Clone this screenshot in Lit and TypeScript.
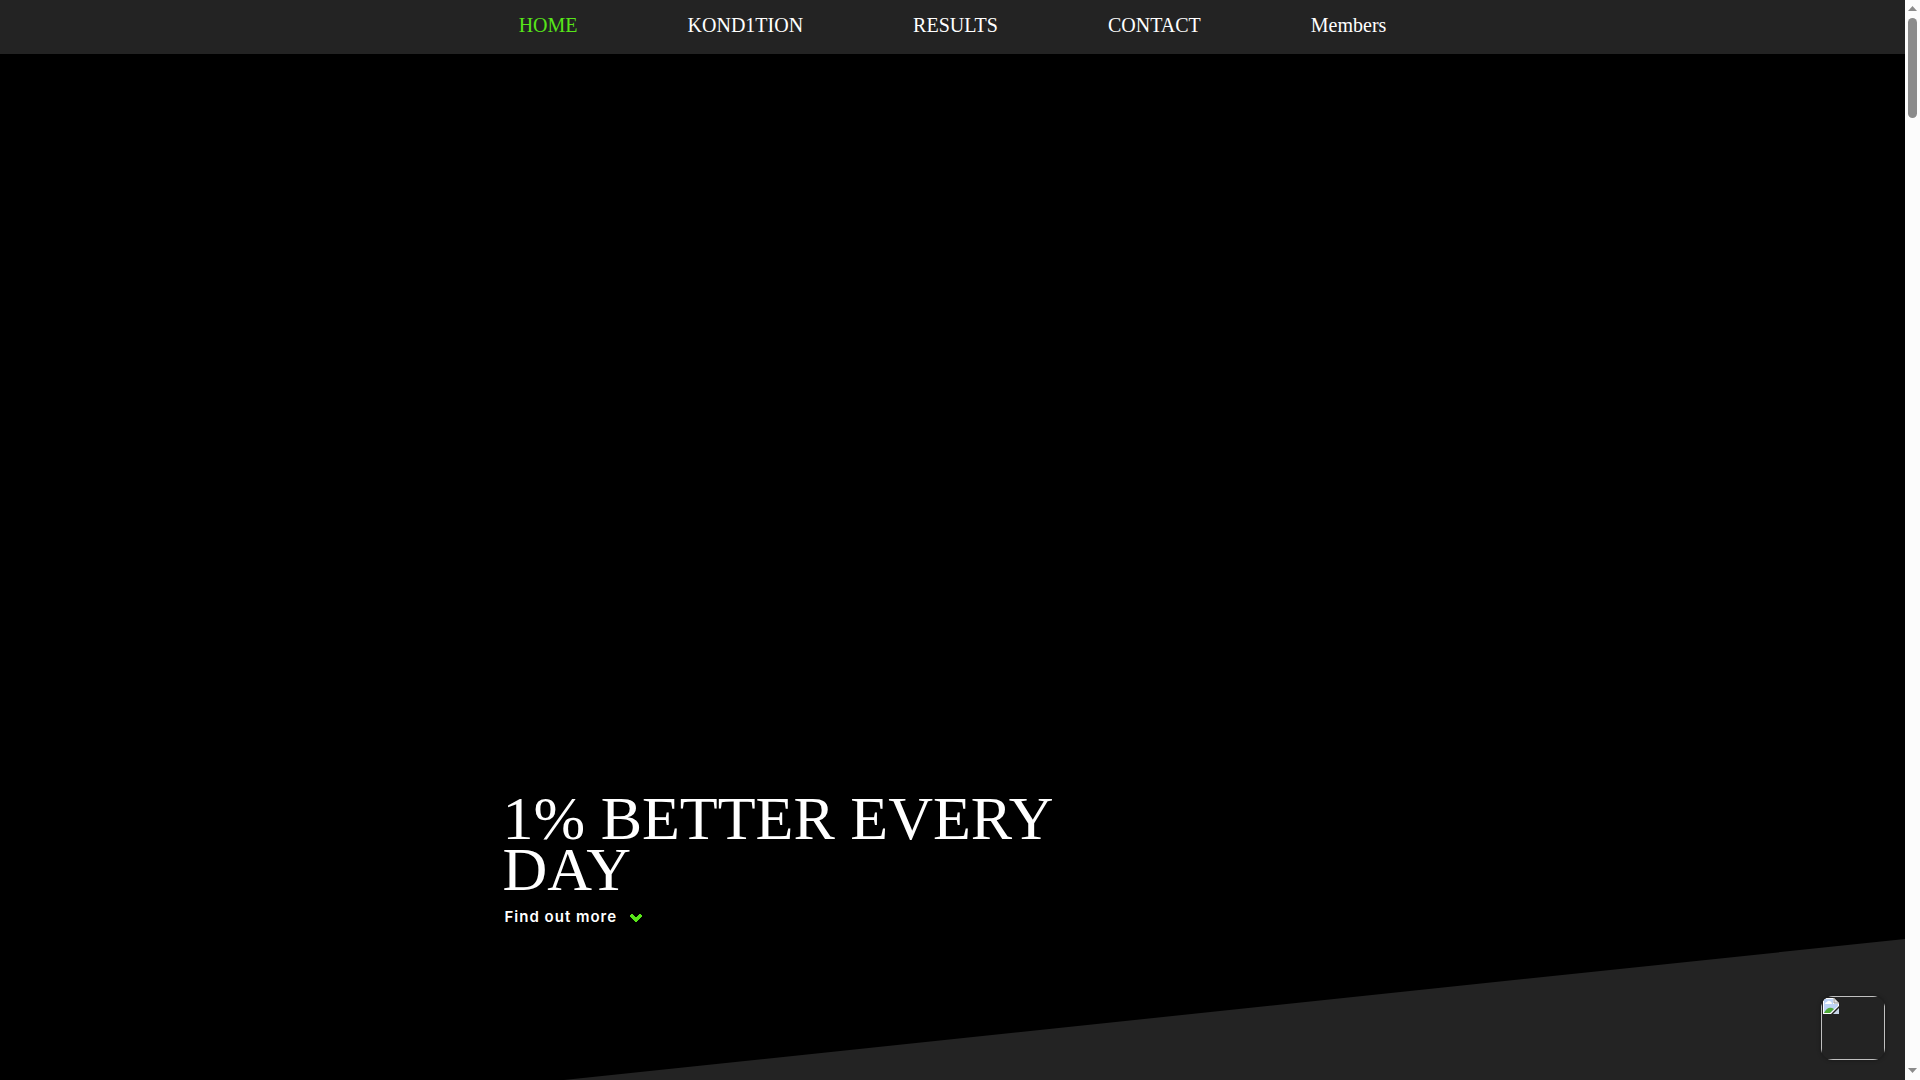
import { LitElement, html, css } from "lit";
import { customElement, state } from "lit/decorators.js";

const links = ["HOME", "KOND1TION", "RESULTS", "CONTACT", "Members"];

@customElement("site-nav")
class SiteNav extends LitElement {
  @state() active = "HOME";

  static styles = css`
    :host {
      display: block;
      background: #232323;
      font: 20px/24px "Liberation Serif", serif;
    }
    .list {
      display: flex;
      justify-content: center;
      gap: 110px;
      margin: 0;
      padding: 13px 0 17px;
      list-style: none;
    }
    .link {
      color: #fff;
      text-decoration: none;
    }
    .link.active {
      color: #57e619;
    }
  `;

  render() {
    return html`<nav aria-label="Main">
      <ul class="list">
        ${links.map(
          (name) => html`<li>
            <a
              class="link ${name === this.active ? "active" : ""}"
              href="#${name.toLowerCase()}"
              @click=${() => (this.active = name)}
              >${name}</a
            >
          </li>`
        )}
      </ul>
    </nav>`;
  }
}

@customElement("chat-button")
class ChatButton extends LitElement {
  static styles = css`
    :host {
      display: block;
    }
    .button {
      display: block;
      width: 64px;
      height: 64px;
      padding: 0;
      border: 0;
      border-radius: 12px;
      overflow: hidden;
      background: #232323;
      box-shadow: 0 0 4px rgba(0, 0, 0, 0.4);
      cursor: pointer;
    }
    .frame {
      display: flex;
      align-items: flex-start;
      box-sizing: border-box;
      width: 100%;
      height: 100%;
      padding: 1px;
      border: 1px solid #c0c0c0;
    }
  `;

  render() {
    return html`<button class="button" aria-label="Open chat">
      <span class="frame">
        <svg width="16" height="16" viewBox="0 0 16 16" aria-hidden="true">
          <path d="M0 0H11L16 5V8L8 16H0Z" fill="#fff" />
          <path d="M1 1H10V6H15V8L7 15H1Z" fill="#bdd3f5" />
          <path d="M2 6Q2 4 4 4Q5 2 7 3Q9 4 9 6Z" fill="#fff" />
          <path d="M1 15Q5 7 11 11L7 15Z" fill="#4faa38" />
          <path d="M11 0V5H16Z" fill="#e4e4e4" stroke="#999" stroke-width="1" />
          <path d="M16 10V16H10Z" fill="#c9d6ea" />
        </svg>
      </span>
    </button>`;
  }
}

@customElement("scroll-track")
class ScrollTrack extends LitElement {
  static styles = css`
    :host {
      display: flex;
      flex-direction: column;
      align-items: center;
      box-sizing: border-box;
      width: 15px;
      padding: 6px 0 7px;
      background: #fcfcfc;
    }
    .thumb {
      width: 9px;
      height: 100px;
      margin: 7px 0 auto;
      border-radius: 5px;
      background: #8b8b8b;
    }
    .arrow {
      display: block;
      fill: #8b8b8b;
    }
  `;

  render() {
    return html`
      <svg class="arrow" width="9" height="5" viewBox="0 0 18 10"><path d="M0 10L9 0L18 10Z" /></svg>
      <div class="thumb"></div>
      <svg class="arrow" width="9" height="5" viewBox="0 0 18 10"><path d="M0 0H18L9 10Z" /></svg>
    `;
  }
}

@customElement("app-root")
class AppRoot extends LitElement {
  static styles = css`
    :host {
      display: flex;
      min-height: 100vh;
      background: #000;
      color: #fff;
    }
    .page {
      display: flex;
      flex: 1;
      flex-direction: column;
      min-width: 0;
    }
    .hero {
      position: relative;
      display: flex;
      flex: 1;
      flex-direction: column;
      justify-content: flex-end;
      overflow: hidden;
    }
    .slope {
      position: absolute;
      right: 0;
      bottom: 0;
      width: 70.4%;
      height: 141px;
      background: #232323;
      clip-path: polygon(0 100%, 100% 0, 100% 100%);
    }
    .content {
      display: flex;
      flex-direction: column;
      align-items: flex-start;
      gap: 12px;
      box-sizing: border-box;
      width: 100%;
      max-width: 900px;
      margin: 0 auto;
      padding-bottom: 153px;
    }
    .title {
      max-width: 600px;
      margin: 0;
      font: 400 62px/51px "Liberation Serif", serif;
    }
    .more {
      display: flex;
      align-items: center;
      gap: 12px;
      padding-left: 2px;
      color: #fff;
      font: 600 15px/20px Inter, sans-serif;
      letter-spacing: 1px;
      text-decoration: none;
    }
    .chevron {
      display: block;
    }
    .chat {
      position: fixed;
      right: 35px;
      bottom: 20px;
    }
  `;

  render() {
    return html`
      <div class="page">
        <site-nav></site-nav>
        <main class="hero">
          <div class="slope"></div>
          <div class="content">
            <h1 class="title">1% BETTER EVERY DAY</h1>
            <a class="more" href="#more"
              >Find out more
              <svg class="chevron" width="14" height="12" viewBox="0 0 14 12" aria-hidden="true">
                <path d="M1 5L3 3L7 7L11 3L13 5L7 11Z" fill="#57e619" stroke="#57e619" stroke-linejoin="round" />
              </svg>
            </a>
          </div>
        </main>
      </div>
      <scroll-track aria-hidden="true"></scroll-track>
      <chat-button class="chat"></chat-button>
    `;
  }
}
